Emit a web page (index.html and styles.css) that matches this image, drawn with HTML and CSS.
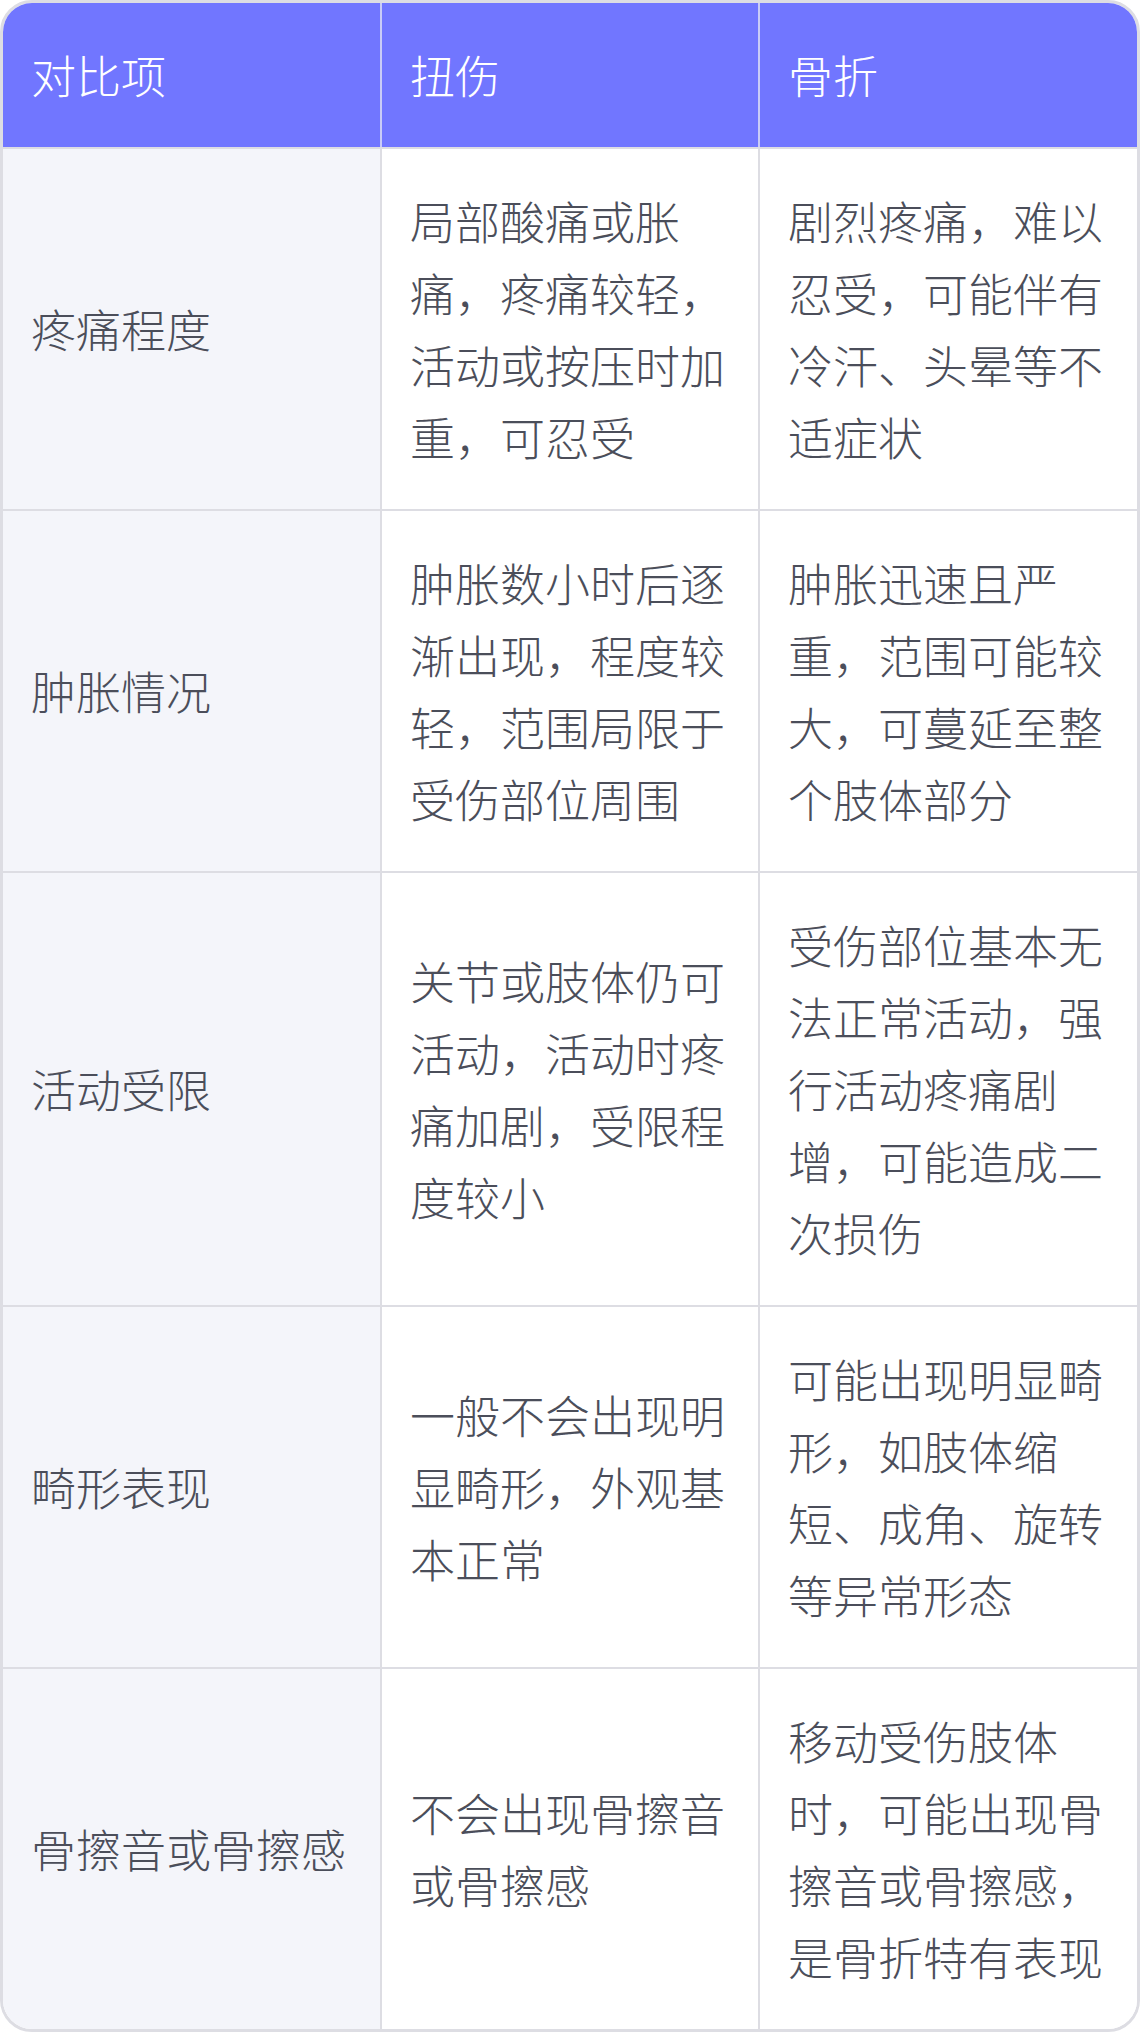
FILE: index.html
```html
<!DOCTYPE html>
<html lang="zh-CN">
<head>
  <meta charset="UTF-8">
  <meta name="viewport" content="width=device-width, initial-scale=1.0">
  <title>扭伤与骨折对比</title>
  <link rel="stylesheet" href="styles.css">
</head>
<body>
  <div class="table-wrap">
    <table class="compare">
      <thead>
        <tr>
          <th>对比项</th>
          <th>扭伤</th>
          <th>骨折</th>
        </tr>
      </thead>
      <tbody>
        <tr>
          <td class="item">疼痛程度</td>
          <td>局部酸痛或胀痛，疼痛较轻，活动或按压时加重，可忍受</td>
          <td>剧烈疼痛，难以忍受，可能伴有冷汗、头晕等不适症状</td>
        </tr>
        <tr>
          <td class="item">肿胀情况</td>
          <td>肿胀数小时后逐渐出现，程度较轻，范围局限于受伤部位周围</td>
          <td>肿胀迅速且严重，范围可能较大，可蔓延至整个肢体部分</td>
        </tr>
        <tr>
          <td class="item">活动受限</td>
          <td>关节或肢体仍可活动，活动时疼痛加剧，受限程度较小</td>
          <td>受伤部位基本无法正常活动，强行活动疼痛剧增，可能造成二次损伤</td>
        </tr>
        <tr>
          <td class="item">畸形表现</td>
          <td>一般不会出现明显畸形，外观基本正常</td>
          <td>可能出现明显畸形，如肢体缩短、成角、旋转等异常形态</td>
        </tr>
        <tr>
          <td class="item">骨擦音或骨擦感</td>
          <td>不会出现骨擦音或骨擦感</td>
          <td>移动受伤肢体时，可能出现骨擦音或骨擦感，是骨折特有表现</td>
        </tr>
      </tbody>
    </table>
  </div>
</body>
</html>
```

FILE: styles.css
```css
body {
  margin: 0;
  font-family: "Noto Sans CJK SC", "Noto Sans", sans-serif;
  background: #ffffff;
}

.table-wrap {
  width: 1140px;
  box-sizing: border-box;
  border: 3px solid #dddde3;
  border-radius: 32px;
  overflow: hidden;
}

.compare {
  width: 100%;
  border-collapse: collapse;
  table-layout: fixed;
  font-size: 45px;
  font-weight: 300;
  line-height: 72px;
  color: #4b4e5a;
}

.compare th,
.compare td {
  padding: 36px 28px;
  text-align: left;
  vertical-align: middle;
  border-right: 2px solid #dddde3;
  border-bottom: 2px solid #dddde3;
}

.compare th:last-child,
.compare td:last-child {
  border-right: none;
}

.compare tbody tr:last-child td {
  border-bottom: none;
}

.compare th {
  background: #7176ff;
  color: #ffffff;
  font-weight: 300;
  border-right-color: #c9cbf7;
  border-bottom-color: #dddde3;
}

.compare td {
  background: #ffffff;
}

.compare td.item {
  background: #f4f5fa;
}
```
